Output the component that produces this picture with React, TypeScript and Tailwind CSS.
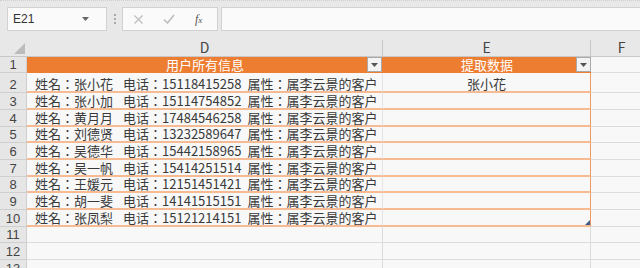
import React from "react";

const people = [
  { name: "张小花", phone: "15118415258" },
  { name: "张小加", phone: "15114754852" },
  { name: "黄月月", phone: "17484546258" },
  { name: "刘德贤", phone: "13232589647" },
  { name: "吴德华", phone: "15442158965" },
  { name: "吴一帆", phone: "15414251514" },
  { name: "王媛元", phone: "12151451421" },
  { name: "胡一斐", phone: "14141515151" },
  { name: "张凤梨", phone: "15121214151" },
];

// row heights after row 2 follow a 17/17/16 rhythm
const rowHeights = ["h-[17px]", "h-[17px]", "h-[16px]"];

const FilterButton = () => (
  <div className="w-[15px] h-[15px] bg-[#f3f3f3] border border-[#a9a9a9] flex items-center justify-center">
    <svg width="7" height="4" viewBox="0 0 7 4">
      <path d="M0 0h7L3.5 4z" fill="#555" />
    </svg>
  </div>
);

const RowHead = ({ n, h }: { n: number; h: string }) => (
  <div
    className={`${h} w-[27px] shrink-0 bg-[#e6e6e6] border-r border-b border-[#cfcfcf] flex items-end justify-center text-[13px] leading-[15px] text-[#444] overflow-hidden`}
    style={{ fontFamily: '"Liberation Sans", sans-serif' }}
  >
    {n}
  </div>
);

export default function App() {
  return (
    <div
      className="w-[640px] h-[268px] overflow-hidden bg-[#e8e8e8] text-[#333]"
      style={{ fontFamily: '"Noto Sans CJK TC", "Noto Sans CJK SC", "Liberation Sans", sans-serif' }}
    >
      {/* formula bar */}
      <div className="h-[38px] border-t border-dotted border-[#cfcfcf] flex items-start pt-[6px] pl-[7px]">
        <div className="w-[100px] h-[24px] bg-[#fafafa] border border-[#d2d2d2] flex items-center justify-between pl-[5px] pr-[17px]">
          <span className="text-[12px] text-[#333]" style={{ fontFamily: '"Liberation Sans", sans-serif' }}>
            E21
          </span>
          <svg width="7" height="4" viewBox="0 0 7 4">
            <path d="M0 0h7L3.5 4z" fill="#666" />
          </svg>
        </div>
        <div className="w-[15px] h-[24px] flex flex-col items-center justify-center gap-[2px]">
          <span className="w-[2px] h-[2px] bg-[#aaa]" />
          <span className="w-[2px] h-[2px] bg-[#aaa]" />
          <span className="w-[2px] h-[2px] bg-[#aaa]" />
        </div>
        <div className="w-[96px] h-[24px] bg-[#fafafa] border border-[#d2d2d2] flex items-center pl-[10px]">
          <svg width="11" height="11" viewBox="0 0 11 11">
            <path d="M1.5 1.5l8 8M9.5 1.5l-8 8" stroke="#bdbdbd" strokeWidth="1.2" />
          </svg>
          <svg className="ml-[19px]" width="12" height="10" viewBox="0 0 12 10">
            <path d="M1 5.5l3.5 3.5L11 1" stroke="#bdbdbd" strokeWidth="1.6" fill="none" />
          </svg>
          <span
            className="ml-[20px] text-[12px] italic text-[#555]"
            style={{ fontFamily: '"Liberation Serif", serif' }}
          >
            f<span className="text-[9px]">x</span>
          </span>
        </div>
        <div className="ml-[3px] flex-1 h-[24px] bg-[#fafafa] border-y border-l border-[#d2d2d2]" />
      </div>

      {/* column headers */}
      <div className="flex h-[19px] border-b border-[#c8c8c8]">
        <div className="w-[27px] shrink-0 flex items-end justify-end pr-[2px] pb-[2px]">
          <svg width="11" height="11" viewBox="0 0 11 11">
            <path d="M11 0V11H0z" fill="#bcbcbc" />
          </svg>
        </div>
        <div className="w-[356px] shrink-0 flex items-end justify-center text-[14px] leading-[17px] text-[#444] border-r border-[#c8c8c8] mt-[2px]">
          D
        </div>
        <div className="w-[208px] shrink-0 flex items-end justify-center text-[14px] leading-[17px] text-[#444] border-r border-[#c8c8c8] mt-[2px]">
          E
        </div>
        <div className="w-[62px] shrink-0 flex items-end justify-center text-[14px] leading-[17px] text-[#444] border-r border-[#c8c8c8] mt-[2px]">
          F
        </div>
      </div>

      {/* row 1: table header */}
      <div className="flex h-[16px]">
        <RowHead n={1} h="h-[16px]" />
        <div className="w-[356px] shrink-0 bg-[#ed7d31] relative flex items-center justify-center text-[13px] leading-[16px] text-white">
          用户所有信息
          <div className="absolute right-[1px] top-0">
            <FilterButton />
          </div>
        </div>
        <div className="w-[208px] shrink-0 bg-[#ed7d31] relative flex items-center justify-center text-[13px] leading-[16px] text-white">
          提取数据
          <div className="absolute right-0 top-0">
            <FilterButton />
          </div>
        </div>
        <div className="w-[62px] shrink-0 bg-[#f8f8f8] border-b border-r border-[#dcdcdc]" />
      </div>

      {/* rows 2-10: table body */}
      {people.map((p, i) => {
        const h = i === 0 ? "h-[20px]" : rowHeights[(i - 1) % 3];
        return (
          <div key={p.name} className={`flex ${h}`}>
            <RowHead n={i + 2} h={h} />
            <div className="w-[356px] shrink-0 bg-[#f8f8f8] border-b-2 border-r border-b-[#f6bb93] border-r-[#e4e4e4] flex items-end pl-[8px] text-[13px] leading-[15px] whitespace-nowrap text-[#3a3a3a]">
              <span>姓名：{p.name}</span>
              <span className="ml-[10px]">电话：{p.phone}</span>
              <span className="ml-[6px]">属性：属李云景的客户</span>
            </div>
            <div className="w-[208px] shrink-0 bg-[#f8f8f8] border-b-2 border-r border-b-[#f6bb93] border-r-[#ef9a62] flex items-end justify-center text-[13px] leading-[15px] text-[#3a3a3a] relative">
              {i === 0 ? "张小花" : ""}
              {i === people.length - 1 && (
                <svg className="absolute right-0 bottom-0" width="5" height="5" viewBox="0 0 5 5">
                  <path d="M5 0V5H0z" fill="#3c5a86" />
                </svg>
              )}
            </div>
            <div className="w-[62px] shrink-0 bg-[#f8f8f8] border-b border-r border-[#dcdcdc]" />
          </div>
        );
      })}

      {/* empty rows */}
      {[11, 12, 13].map((n, i) => {
        const h = rowHeights[(i + 8) % 3];
        return (
          <div key={n} className={`flex ${h}`}>
            <RowHead n={n} h={h} />
            <div className="w-[356px] shrink-0 bg-[#f8f8f8] border-b border-r border-[#dcdcdc]" />
            <div className="w-[208px] shrink-0 bg-[#f8f8f8] border-b border-r border-[#dcdcdc]" />
            <div className="w-[62px] shrink-0 bg-[#f8f8f8] border-b border-r border-[#dcdcdc]" />
          </div>
        );
      })}
    </div>
  );
}
